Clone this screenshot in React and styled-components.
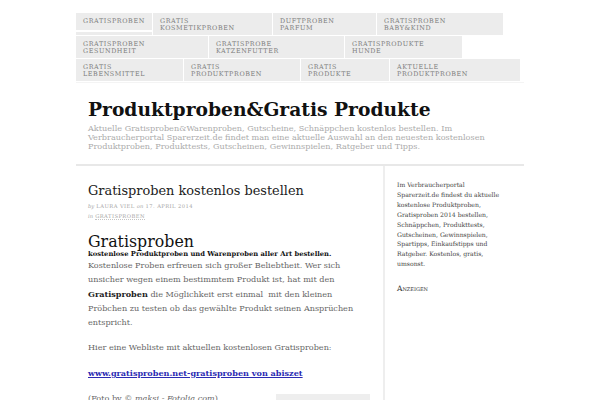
import React from 'react';
import styled, { createGlobalStyle } from 'styled-components';

const GlobalStyle = createGlobalStyle`
  html, body {
    margin: 0;
    padding: 0;
    background: #ffffff;
  }
  body {
    font-family: "DejaVu Serif", serif;
  }
`;

const Page = styled.div`
  width: 448px;
  margin: 0 auto;
  padding-top: 13px;
`;

const Nav = styled.nav`
  display: flex;
  flex-direction: column;
  gap: 1px;
  padding-bottom: 1px;
  border-bottom: 1px solid #f4f4f4;
`;

const NavRow = styled.div`
  display: flex;
  gap: 1px;
`;

const NavItem = styled.a`
  position: relative;
  box-sizing: border-box;
  width: ${p => p.$w}px;
  height: 22px;
  padding: 5px 7px 0;
  background: #ececec;
  color: #7c7c7c;
  font-family: "DejaVu Serif", serif;
  font-size: 6.4px;
  line-height: 6.5px;
  letter-spacing: 0.6px;
  text-transform: uppercase;
  text-decoration: none;
  ${p => p.$active && `
    &::after {
      content: '';
      position: absolute;
      left: 0;
      right: 0;
      bottom: 3px;
      height: 2px;
      background: #ffffff;
    }
  `}
`;

const Header = styled.header`
  padding: 14px 12px 13px;
  border-bottom: 2px solid #e8e8e8;
`;

const SiteTitle = styled.h1`
  margin: 0;
  font-family: "DejaVu Serif", serif;
  font-weight: bold;
  font-size: 18.7px;
  line-height: 24px;
  color: #111111;
`;

const Tagline = styled.p`
  margin: 3px 0 0;
  font-family: "DejaVu Serif", serif;
  font-size: 8.15px;
  line-height: 9px;
  color: #ababab;
  white-space: nowrap;
`;

const Columns = styled.div`
  display: flex;
  min-height: 240px;
`;

const Main = styled.main`
  box-sizing: border-box;
  width: 309px;
  padding: 16px 12px 0;
  border-right: 2px solid #eeeeee;
`;

const PostTitle = styled.h2`
  margin: 0;
  font-family: "DejaVu Serif", serif;
  font-weight: normal;
  font-size: 12.9px;
  line-height: 17px;
  color: #222222;
`;

const Meta = styled.div`
  margin-top: 2px;
  font-size: 5.2px;
  line-height: 10px;
  letter-spacing: 0.45px;
  color: #a5a5a5;
  text-transform: uppercase;

  i {
    font-style: italic;
    text-transform: none;
    letter-spacing: 0;
  }
`;

const MetaLink = styled.span`
  border-bottom: 1px dotted #c4c4c4;
`;

const Heading = styled.h1`
  margin: 13px 0 0;
  font-family: "DejaVu Serif", serif;
  font-weight: normal;
  font-size: 15.8px;
  line-height: 16px;
  color: #111111;
`;

const Lead = styled.div`
  font-family: "DejaVu Serif", serif;
  font-weight: bold;
  font-size: 6.75px;
  line-height: 7px;
  padding-top: 1px;
  color: #111111;
`;

const Text = styled.p`
  margin: 0 0 11px;
  font-family: "DejaVu Serif", serif;
  font-size: 8.1px;
  line-height: 14.3px;
  color: #666666;

  b {
    color: #222222;
  }

  i {
    font-style: italic;
  }
`;

const WebLink = styled.a`
  font-weight: bold;
  color: #2b2bb3;
  text-decoration: underline;
`;

const FotoRow = styled.div`
  display: flex;
  align-items: flex-start;
  justify-content: space-between;
`;

const AdBox = styled.div`
  width: 94px;
  height: 12px;
  margin-top: 3px;
  margin-right: 1px;
  background: #eeeeee;
`;

const Sidebar = styled.aside`
  box-sizing: border-box;
  width: 139px;
  padding: 14px 12px 0;
`;

const SideText = styled.p`
  margin: 0;
  font-family: "DejaVu Serif", serif;
  font-size: 6.15px;
  line-height: 9.9px;
  color: #444444;
  white-space: nowrap;
`;

const WidgetTitle = styled.h3`
  margin: 15px 0 0;
  font-family: "DejaVu Serif", serif;
  font-weight: normal;
  font-size: 7.5px;
  font-variant: small-caps;
  color: #333333;
`;

const menu = [
  [
    { label: 'Gratisproben', w: 76, active: true },
    { label: <>Gratis<br />Kosmetikproben</>, w: 119 },
    { label: <>Duftproben<br />Parfum</>, w: 103 },
    { label: <>Gratisproben<br />Baby&amp;Kind</>, w: 126 },
  ],
  [
    { label: <>Gratisproben<br />Gesundheit</>, w: 132 },
    { label: <>Gratisprobe<br />Katzenfutter</>, w: 135 },
    { label: <>Gratisprodukte<br />Hunde</>, w: 117 },
  ],
  [
    { label: <>Gratis<br />Lebensmittel</>, w: 107 },
    { label: <>Gratis<br />Produktproben</>, w: 116 },
    { label: <>Gratis<br />Produkte</>, w: 88 },
    { label: <>Aktuelle<br />Produktproben</>, w: 130 },
  ],
];

const sideLines = [
  'Im Verbraucherportal',
  'Sparerzeit.de findest du aktuelle',
  'kostenlose Produktproben,',
  'Gratisproben 2014 bestellen,',
  'Schnäppchen, Produkttests,',
  'Gutscheinen, Gewinnspielen,',
  'Spartipps, Einkaufstipps und',
  'Ratgeber. Kostenlos, gratis,',
  'umsonst.',
];

export default function App() {
  return (
    <>
      <GlobalStyle />
      <Page>
        <Nav>
          {menu.map((row, i) => (
            <NavRow key={i}>
              {row.map((item, j) => (
                <NavItem key={j} $w={item.w} $active={item.active}>
                  {item.label}
                </NavItem>
              ))}
            </NavRow>
          ))}
        </Nav>

        <Header>
          <SiteTitle>Produktproben&amp;Gratis Produkte</SiteTitle>
          <Tagline>
            Aktuelle Gratisproben&amp;Warenproben, Gutscheine, Schnäppchen kostenlos bestellen. Im
            <br />
            Verbraucherportal Sparerzeit.de findet man eine aktuelle Auswahl an den neuesten kostenlosen
            <br />
            Produktproben, Produkttests, Gutscheinen, Gewinnspielen, Ratgeber und Tipps.
          </Tagline>
        </Header>

        <Columns>
          <Main>
            <PostTitle>Gratisproben kostenlos bestellen</PostTitle>
            <Meta>
              <i>by</i> Laura Viel <i>on</i> 17. April 2014
              <br />
              <i>in</i> <MetaLink>Gratisproben</MetaLink>
            </Meta>
            <Heading>Gratisproben</Heading>
            <Lead>kostenlose Produktproben und Warenproben aller Art bestellen.</Lead>
            <Text>
              Kostenlose Proben erfreuen sich großer Beliebtheit. Wer sich unsicher wegen einem
              bestimmtem Produkt ist, hat mit den <b>Gratisproben</b> die Möglichkeit erst einmal&nbsp;
              mit den kleinen Pröbchen zu testen ob das gewählte Produkt seinen Ansprüchen entspricht.
            </Text>
            <Text>Hier eine Webliste mit aktuellen kostenlosen Gratisproben:</Text>
            <Text>
              <WebLink>www.gratisproben.net-gratisproben von abiszet</WebLink>
            </Text>
            <FotoRow>
              <Text>(Foto by © <i>maksi - Fotolia.com</i>)</Text>
              <AdBox />
            </FotoRow>
          </Main>

          <Sidebar>
            <SideText>
              {sideLines.map((line, i) => (
                <React.Fragment key={i}>
                  {line}
                  {i < sideLines.length - 1 && <br />}
                </React.Fragment>
              ))}
            </SideText>
            <WidgetTitle>Anzeigen</WidgetTitle>
          </Sidebar>
        </Columns>
      </Page>
    </>
  );
}
